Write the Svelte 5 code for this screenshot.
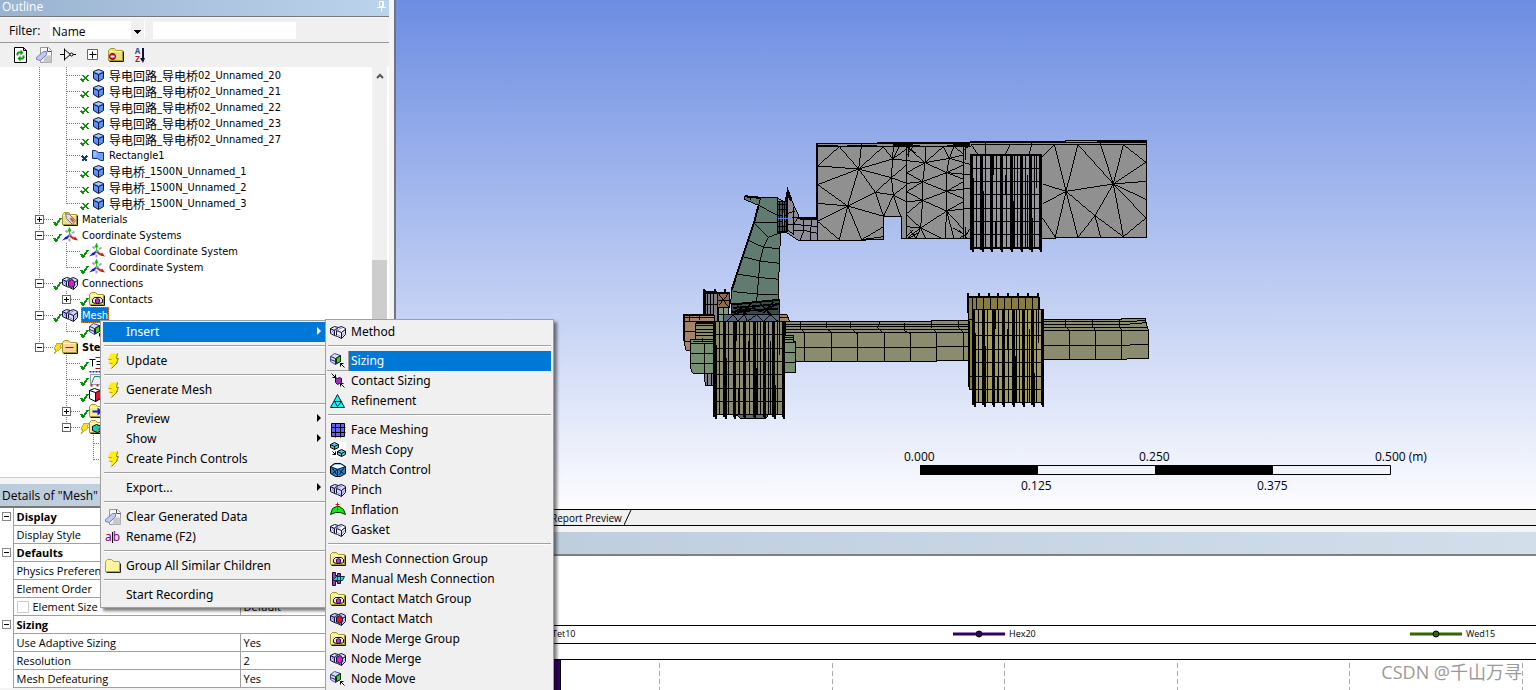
<script lang="ts">
    const bodies = ["20", "21", "22", "23", "27"].map((n) => ({
        guides: "vt", state: "hidden", icon: "body", label: "导电回路_导电桥02_Unnamed_" + n
    }));

    // guides: v = line through, t = branch, e = last branch, . = empty
    const tree = [
        ...bodies,
        { guides: "vt", state: "cross", icon: "surface", label: "Rectangle1" },
        { guides: "vt", state: "hidden", icon: "body", label: "导电桥_1500N_Unnamed_1" },
        { guides: "vt", state: "hidden", icon: "body", label: "导电桥_1500N_Unnamed_2" },
        { guides: "ve", state: "hidden", icon: "body", label: "导电桥_1500N_Unnamed_3" },
        { guides: "t", box: "+", state: "ok", icon: "materials", label: "Materials" },
        { guides: "t", box: "-", state: "ok", icon: "axes", label: "Coordinate Systems" },
        { guides: "vt", state: "ok", icon: "axes", label: "Global Coordinate System" },
        { guides: "ve", state: "ok", icon: "axes", label: "Coordinate System" },
        { guides: "t", box: "-", state: "ok", icon: "merge", label: "Connections" },
        { guides: "ve", box: "+", state: "ok", icon: "group", label: "Contacts" },
        { guides: "t", box: "-", state: "ok", icon: "mesh", label: "Mesh", selected: true },
        { guides: "ve", state: "ok", icon: "sizing", label: "" },
        { guides: "e", box: "-", state: "bolt", icon: "env", label: "Stea", bold: true },
        { guides: ".t", state: "ok", icon: "temp", label: "" },
        { guides: ".t", state: "ok", icon: "settings", label: "" },
        { guides: ".t", state: "ok", icon: "face", label: "" },
        { guides: ".t", box: "+", state: "ok", icon: "import", label: "" },
        { guides: ".e", box: "-", state: "bolt", icon: "solution", label: "" },
        { guides: "..t", state: "", icon: "", label: "" },
        { guides: "..e", state: "", icon: "", label: "" }
    ];

    const menu = [
        { label: "Insert", sub: true, active: true },
        null,
        { label: "Update", icon: "bolt" },
        null,
        { label: "Generate Mesh", icon: "bolt" },
        null,
        { label: "Preview", sub: true },
        { label: "Show", sub: true },
        { label: "Create Pinch Controls", icon: "bolt" },
        null,
        { label: "Export...", sub: true },
        null,
        { label: "Clear Generated Data", icon: "clear" },
        { label: "Rename (F2)", icon: "rename" },
        null,
        { label: "Group All Similar Children", icon: "folder" },
        null,
        { label: "Start Recording" }
    ];

    const insertMenu = [
        { label: "Method", icon: "method" },
        null,
        { label: "Sizing", icon: "sizing", active: true },
        { label: "Contact Sizing", icon: "contactsizing" },
        { label: "Refinement", icon: "refine" },
        null,
        { label: "Face Meshing", icon: "facemesh" },
        { label: "Mesh Copy", icon: "copy" },
        { label: "Match Control", icon: "match" },
        { label: "Pinch", icon: "mesh" },
        { label: "Inflation", icon: "inflation" },
        { label: "Gasket", icon: "method" },
        null,
        { label: "Mesh Connection Group", icon: "group" },
        { label: "Manual Mesh Connection", icon: "manual" },
        { label: "Contact Match Group", icon: "group" },
        { label: "Contact Match", icon: "contactmatch" },
        { label: "Node Merge Group", icon: "group" },
        { label: "Node Merge", icon: "merge" },
        { label: "Node Move", icon: "sizing" }
    ];

    const details = [
        { group: "Display" },
        { name: "Display Style", value: "" },
        { group: "Defaults" },
        { name: "Physics Preference", value: "" },
        { name: "Element Order", value: "" },
        { name: "Element Size", value: "Default", check: true },
        { group: "Sizing" },
        { name: "Use Adaptive Sizing", value: "Yes" },
        { name: "Resolution", value: "2" },
        { name: "Mesh Defeaturing", value: "Yes" }
    ];

    // fin packs of the heat sinks, in thirds of a pixel
    const fins = [
        { ox: 950, oy: 130, x: 62, y: 74, w: 214, h: 281, fill: "#96969f", rows: [76, 115, 154, 194, 235, 274, 313, 353] },
        { ox: 680, oy: 280, x: 101, y: 124, w: 212, h: 281, fill: "#8b8a6d", rows: [125, 163, 205, 244, 283, 325, 364, 404] },
        { ox: 860, oy: 280, x: 338, y: 88, w: 214, h: 281, fill: "#a39a62", rows: [89, 127, 168, 208, 247, 289, 328, 368] }
    ];
    const thick = [0, 30, 59, 89, 118, 148, 177, 205];
    const thin = [19, 45, 77, 107, 133, 165, 192];
    // short edges where a fin face shifts part way down
    const partial = [
        [10, 70, 211], [40, 110, 171], [70, 0, 60], [74, 200, 81], [97, 30, 70], [104, 60, 60],
        [128, 140, 141], [140, 0, 281], [155, 90, 191], [172, 60, 221], [187, 190, 91], [199, 0, 100]
    ];
    const spikes = [325, 358, 386, 415, 445, 474, 503, 533];

    let filter = $state("Name");
    let search = $state("");
    const split = (s: string) => s.split(/([\u4e00-\u9fff]+)/).filter(Boolean);
</script>

{#snippet cubes(fill, face)}
    <path d="M0 4l4-2 4 1 3-1 4 2v6l-4 4-4-2-3-1-4-2z" {fill} stroke="#111130" />
    <path d="M1 5l3 5M5 3l3 3M1 8l4-4M11 8l3-3M7 10l3 2M11 12l3-4M8 5l4-2" fill="none" stroke="#8583f0" />
    <path d="M0 4l4 2v5M4 6l4-3M6 6l5 2v6M11 8l4-3M6 6v5" fill="none" stroke="#111130" />
    {#if face}<path d="M6 6l3-2 3 2v4l-3 2-3-2z" fill={face} stroke="#111130" />{/if}
{/snippet}

{#snippet folder(fill)}
    <path d="M0 13V3l2-2h4l2 2h6v10z" {fill} stroke="#a3962a" />
    <path d="M1 14h14V4" fill="none" stroke="#111" />
    <path d="M1 4h12" stroke="#fffde0" />
{/snippet}

{#snippet icon(name)}
    <svg class="icon" viewBox="-.5 -.5 16 16" width="16" height="16" aria-hidden="true">
        {#if name === "body"}
            <path d="M4 4l5-2 5 2v7l-5 3-5-3z" fill="#5b93f5" stroke="#101840" />
            <path d="M5 4l4-1 4 1-4 2z" fill="#a9c8ff" />
            <path d="M4 5l5 2 5-2M9 7v7" fill="none" stroke="#101840" />
        {:else if name === "surface"}
            <path d="M3 3h3l3 2h5v8h-3l-3-2H3z" fill="#6f9ffb" stroke="#16316f" />
            <path d="M4 4h3v5H4z" fill="#9fc0ff" />
        {:else if name === "materials"}
            {@render folder("#e9dc98")}
            <path d="M3 2l4 1 6 6-3 4-6-6z" fill="#dcdcdc" stroke="#777" />
            <path d="M7 7l2-1 3 3-2 2z" fill="#e0533a" />
        {:else if name === "axes"}
            <path d="M3 3l9 8M12 4l-8 6M7 14V9" stroke="#aaa" stroke-width="2" stroke-dasharray="3 2" />
            <path d="M7 8V3" stroke="#1cd31c" /><path d="M5 4l2-5 2 5z" fill="#11b511" />
            <path d="M7 8l-4 3" stroke="#1b1be0" stroke-width="2" /><path d="M-.5 13l4-4 2 2z" fill="#1111c8" />
            <path d="M7 8l4 3" stroke="#e01b1b" stroke-width="2" /><path d="M15.500 13l-5-1 2-3z" fill="#d81010" />
            <path d="M6 7h2v2H6z" fill="#29c7e8" />
        {:else if name === "mesh"}
            {@render cubes("#d9d9fb", "")}
        {:else if name === "method"}
            {@render cubes("#f6f6ff", "")}
        {:else if name === "merge"}
            {@render cubes("#e4e0f4", "#e413e4")}
        {:else if name === "contactmatch"}
            {@render cubes("#cfcfee", "#e01030")}
        {:else if name === "group"}
            {@render folder("#f3eb9c")}
            <path d="M3 8l2-2h6l2 2v3l-3 1H6l-3-1z" fill="#e6dcea" stroke="#111" />
            <path d="M6 8l2-1 2 1v3l-2 1-2-1z" fill="#c22fc9" stroke="#301030" />
        {:else if name === "sizing"}
            <path d="M0 3l4-3 6 2v6l-5 3-5-3z" fill="#d7e0f4" stroke="#4a48b8" />
            <path d="M0 3l5 2v6M5 5l5-3M0 6l5 2" fill="none" stroke="#222250" />
            <path d="M6 5l4-3v6l-4 2z" fill="#3fd31f" stroke="#0a300a" />
            <path d="M10 10h3M10 10v3M10 10l4 4" stroke="#000" fill="none" />
        {:else if name === "contactsizing"}
            <path d="M5 4l2 1 2-1 2 1v6l-2-1-2 1-2-2z" fill="#9b30b8" stroke="#200828" />
            <path d="M1 0l4 4M5 1v3H2M10 10h3M10 10v3M10 10l4 4" stroke="#000" fill="none" />
        {:else if name === "refine"}
            <path d="M7 1l7 13H0z" fill="#1df1f1" stroke="#002a30" />
            <path d="M4 8h7l-4 5z" fill="none" stroke="#002a30" />
        {:else if name === "facemesh"}
            <path d="M1 1h13v13H1z" fill="#6464f4" stroke="#000" />
            <path d="M5 1v14M10 1v14M1 5h14M1 10h14" stroke="#000" />
        {:else if name === "copy"}
            <path d="M-.5-.5h16v16h-16z" fill="#fff" />
            <path d="M0 2l4-2 4 2v3L4 7 0 5z" fill="#58c7dc" stroke="#000" />
            <path d="M0 2l4 2 4-2M4 4v3" fill="none" stroke="#000" />
            <path d="M7 9l4-2 4 2v3l-4 2-4-2z" fill="#58c7dc" stroke="#000" />
            <path d="M7 9l4 2 4-2M11 11v3M2 9l3 3M5 9v3H2" fill="none" stroke="#000" />
        {:else if name === "match"}
            <path d="M0 4l4-3h6l5 3v7l-5 3H5l-5-3z" fill="#2d7ecb" stroke="#000" />
            <path d="M1 4l4-2h5l4 2-4 2H5z" fill="#fff" />
            <path d="M0 4l7 3 8-3M7 7v7M2 6l4 6M2 11l4-3M13 6l-4 6M13 11L9 8" fill="none" stroke="#03121f" />
        {:else if name === "inflation"}
            <path d="M0 12l2-6 4-2h3l4 3 2 5-5-2H5z" fill="#13e813" stroke="#063006" />
            <path d="M7 8V0M5 2h4" stroke="#e01010" />
        {:else if name === "manual"}
            <path d="M2 1h3v3h2V2h3v10H7v-2H5v4H2z" fill="#a034bd" stroke="#200828" />
            <path d="M3 8l3-3h8l-2 4H3z" fill="#2ed3df" stroke="#033" />
            <path d="M7 5v4M10 5v4" stroke="#033" />
        {:else if name === "env"}
            {@render folder("#fbd29a")}
            <path d="M3 8h8" stroke="#7a2b10" />
        {:else if name === "temp"}
            <path d="M0 4h6M3 4v7M7 6h5M7 9h5" stroke="#000" />
            <path d="M6 2h10M6 13h10" stroke="#a01010" />
        {:else if name === "settings"}
            <path d="M1 3h14v10H1z" fill="#eef" stroke="#99a" />
            <path d="M0 0h15" stroke="#1b1be0" stroke-width="2" stroke-dasharray="2 1" />
            <path d="M2 12l3-7h5l3 7" fill="none" stroke="#158a58" />
            <path d="M1 14h14" stroke="#c01010" stroke-width="2" stroke-dasharray="2 4" />
        {:else if name === "face"}
            <path d="M0 3l5-2 6 2v8l-5 3-6-3z" fill="#fff" stroke="#000" />
            <path d="M6 5l5-2v8l-5 3z" fill="#e4103c" stroke="#000" /><path d="M0 3l6 2" stroke="#000" />
        {:else if name === "import"}
            {@render folder("#f7ee8c")}
            <path d="M3 8h6" stroke="#1b1be0" stroke-width="2" /><path d="M8 4l5 4-5 4z" fill="#1b1be0" />
        {:else if name === "solution"}
            {@render folder("#f3eb9c")}
            <path d="M3 7l4-2 5 2v4l-4 2-5-2z" fill="#22c8d8" stroke="#000" />
            <path d="M6 7h2v4H6z" fill="#28d028" /><path d="M9 8h2v3H9z" fill="#e42020" />
        {:else if name === "bolt"}
            <path d="M5 0h7l-1 5h2l-2 4h1l-6 6H5l1-5H3l1-4H2z" fill="#ffee10" />
            <path d="M12 0l-1 5h2l-2 4h1l-6 6" fill="none" stroke="#8a7a10" />
            <path d="M3 6h3M4 10h3" stroke="#c79a10" />
        {:else if name === "clear"}
            <path d="M4 0h8l3 3v12H4z" fill="#f6f6f6" stroke="#999" />
            <path d="M8 8h7v7H7z" fill="#c9c9c9" /><path d="M11 0v4h4" fill="none" stroke="#555" />
            <path d="M0 10l7-6h3v3l-6 6-4-1z" fill="#c3c8f0" stroke="#7a80b8" />
        {:else if name === "folder"}
            <path d="M0 13V3l2-2h4l2 2h6v10z" fill="#fdf49b" stroke="#b5a52f" />
            <path d="M1 14h14V5" fill="none" stroke="#222" />
        {:else if name === "refresh"}
            <path d="M2 0h9l3 3v12H2z" fill="#fff" stroke="#000" /><path d="M11 0v3h3" fill="none" stroke="#000" />
            <path d="M5 8V6l1-1h3M11 8v2l-1 1H7" fill="none" stroke="#0d9a0d" stroke-width="2" />
            <path d="M8 2l3 3-3 3zM8 8l-3 3 3 3z" fill="#0d9a0d" />
        {:else if name === "diode"}
            <path d="M-.5 7h4M4 1v12M4 2l6 5-6 5M12 7h4" fill="none" stroke="#000" />
            <circle cx="11" cy="7" r="1.500" fill="#fff" stroke="#000" />
        {:else if name === "expand"}
            <path d="M3 2h10v10H3z" fill="#fff" stroke="#666" /><path d="M5 7h7M8 4v7" stroke="#000" />
        {:else if name === "hide"}
            {@render folder("#e9dc85")}
            <circle cx="4" cy="9" r="3" fill="#d01030" stroke="#600" /><path d="M2 9h4" stroke="#fff" stroke-width="2" />
        {:else if name === "rename"}
            <path d="M6 2h2M9 2h2M8.500 3v10M6 14h2M9 14h2" stroke="#000" fill="none" />
        {/if}
    </svg>
{/snippet}

{#snippet status(name)}
    <svg class="state" viewBox="0 0 9 16" width="9" height="16" shape-rendering="crispEdges" aria-hidden="true">
        {#if name === "ok"}
            <path d="M1 11l2 3 5-7" fill="none" stroke="#0a930a" stroke-width="2" />
        {:else if name === "hidden"}
            <path d="M1 12l2 2 5-6M3 8l5 6" fill="none" stroke="#0a930a" stroke-width="1.500" />
        {:else if name === "cross"}
            <path d="M2 9l5 5M7 9l-5 5" stroke="#11308c" stroke-width="1.500" />
        {:else if name === "bolt"}
            <path d="M4 4h5L7 8h2l-8 7 2-5H1z" fill="#ffe01e" stroke="#b39412" stroke-width=".7" />
        {/if}
    </svg>
{/snippet}

{#snippet popup(items, cls, title)}
    <div class="menu {cls}" role="menu" aria-label={title}>
        {#each items as item}
            {#if item}
                <button class="item" class:active={item.active} role="menuitem">
                    <span class="slot">{#if item.icon === "rename"}<span class="rename">a<i></i>b</span>{:else if item.icon}{@render icon(item.icon)}{/if}</span>
                    <span class="text">{item.label}</span>
                    {#if item.sub}<span class="arrow"></span>{/if}
                </button>
            {:else}
                <hr>
            {/if}
        {/each}
    </div>
{/snippet}

<div class="app">
    <aside>
        <header class="title">
            <span>Outline</span>
            <button class="pin" aria-label="Pin">
                <svg viewBox="0 0 9 12" width="9" height="12" shape-rendering="crispEdges"><path d="M2.500 1.500h4v5h-4zM0 7.500h9M4.500 8v4M5.500 1v6" fill="none" stroke="#fff" /></svg>
            </button>
        </header>
        <div class="filter">
            <label for="filter">Filter:</label>
            <select id="filter" bind:value={filter}><option>Name</option><option>Tag</option><option>Type</option></select>
            <input type="text" aria-label="Filter text" bind:value={search}>
        </div>
        <div class="tools">
            <button aria-label="Refresh">{@render icon("refresh")}</button>
            <button aria-label="Clear">{@render icon("clear")}</button>
            <button aria-label="Diode">{@render icon("diode")}</button>
            <button aria-label="Expand all">{@render icon("expand")}</button>
            <button aria-label="Hide folders">{@render icon("hide")}</button>
            <button class="sort" aria-label="Sort">
                <span><b>A</b><b>Z</b></span>
                <svg viewBox="0 0 5 15" width="5" height="15"><path d="M2 0h2v10h1l-2 5-3-5h2z" fill="#111133" /></svg>
            </button>
        </div>

        <div class="outline">
            <ul>
                {#each tree as row}
                    <li>
                        {#each row.guides as g, i}
                            <span class="guide">
                                <svg viewBox="0 0 27 16" width="27" height="16" shape-rendering="crispEdges" aria-hidden="true">
                                    {#if g !== "."}<path d={g === "e" ? "M13.500 0v9" : "M13.500 0v16"} stroke="#777" stroke-dasharray="1 1" />{/if}
                                    {#if g === "t" || g === "e"}<path d="M14 8.500h13" stroke="#777" stroke-dasharray="1 1" />{/if}
                                </svg>
                                {#if row.box && i === row.guides.length - 1}
                                    <button class="box" aria-label="Toggle {row.label}">
                                        <svg viewBox="0 0 9 9" width="9" height="9" shape-rendering="crispEdges"><path d="M.5.500h8v8h-8z" fill="#fff" stroke="#666" /><path d={row.box === "+" ? "M2 4.500h5M4.500 2v5" : "M2 4.500h5"} stroke="#000" /></svg>
                                    </button>
                                {/if}
                            </span>
                        {/each}
                        {@render status(row.state)}
                        {@render icon(row.icon)}
                        {#if row.label}
                            <span class="label" class:selected={row.selected} class:bold={row.bold}>{#each split(row.label) as part}<span class:han={part > "\u4e00"}>{part}</span>{/each}</span>
                        {/if}
                    </li>
                {/each}
            </ul>
            <div class="scroll">
                <svg viewBox="0 0 8 6" width="8" height="6"><path d="M1 5l3-3 3 3" fill="none" stroke="#555" stroke-width="2" /></svg>
                <div class="thumb"></div>
            </div>
        </div>

        <h2>Details of "Mesh"</h2>
        <table>
            <colgroup><col class="c1"><col class="c2"><col></colgroup>
            <tbody>
                {#each details as d}
                    <tr>
                        <td class="gutter">
                            {#if d.group}
                                <button aria-label="Collapse {d.group}"><svg viewBox="0 0 9 9" width="9" height="9" shape-rendering="crispEdges"><path d="M.5.500h8v8h-8z" fill="#fff" stroke="#888" /><path d="M2 4.500h5" stroke="#000" /></svg></button>
                            {/if}
                        </td>
                        {#if d.group}
                            <th colspan="2">{d.group}</th>
                        {:else if d.check}
                            <td><label><input type="checkbox">{d.name}</label></td><td>{d.value}</td>
                        {:else}
                            <td>{d.name}</td><td>{d.value}</td>
                        {/if}
                    </tr>
                {/each}
            </tbody>
        </table>
    </aside>

    <main>
        <div class="view">
            <svg viewBox="396 0 1140 509" role="img" aria-label="Meshed model">
                <g shape-rendering="crispEdges" stroke="#000" stroke-width="3" fill="none">
                    <!-- top conductor -->
                    <g transform="translate(680 130) scale(.33333)">
                        <path d="M410 40h182v-3h280v-3h286v-3h241l1 291h-273v4H666l-2-67h-53v69h-53v3H412z" fill="#909090" />
                        <path d="M410 41h460M413 51h460M592 38h806M640 41l60 8M800 41h70" />
                        <path d="M413 46h60M500 46h90M640 46h80M800 46h70" />
                        <path d="M411 40v222" stroke-width="5" />
                        <path d="M413 108l123 9M536 117l-58-67-65 58M536 117l9-75M536 117l74-67 28 37-102 30 98 26M536 117l50 70M536 117L413 164l90 64 33-111M503 228l-90-8M503 228l-90 46 65 55zM503 228l42 101 66-39M503 228l108 31M503 228l83-41 48-44M586 187l25 72M586 187l54 8M545 329l66-9" />
                        <path d="M640 195l-6-52 4-56 2-40M640 195l-29 64M640 195l22 64M640 195l40-30M640 195l40 20 48-4M634 143l46-38M634 143l46 17 48-5M638 87l22-40M638 87l42-30M638 87l97 11M680 48v278M610 50h70" />
                        <path d="M735 98l-55-48M735 98l2-50M735 98l55-48M735 98l-55 30 48 27zM735 98l65 30 8-43zM728 155l-48 30 48 26zM728 155l72-27M728 155l72 29-72 27M728 211l-48 40M728 211l-6 83-42-40M728 211l72 32M722 294l-42-4M722 294l-42 32M722 294l-14 32M722 294l16 32M722 294l78-51M722 294l60 30" />
                        <path d="M800 243l-5 83M800 243l22 83M800 243l50 55M800 243l50-28M800 243l70-8M800 243v-59l50 22M800 184l50-29M800 184l70-10M800 184v-56l50-23M800 128l50 20M800 128l70 6M808 85l-18-36M808 85l14-36M808 85l42-10M808 85l62 18M850 48v278M680 50l28 20M850 60l20-14M850 72l-30-24M850 320l20-22M680 318l20-18M850 312l-30-18M688 50l-4 30M700 50l-18 24M685 326l30-18M690 300l20 26M835 326l30-16M838 300l26 26M858 290v36M858 50v40" />
                        <path d="M640 43h60M820 43h50" stroke-width="6" />
                        <!-- connector -->
                        <path d="M292 204l26 14 6-31 34 75 54 2v67h-57l-35-23-30-1z" fill="#8e8c98" />
                        <path d="M360 266h52M318 218l6-31 10 25" stroke-width="9" />
                        <path d="M322 210v95M340 230v85M335 262l60 6-5 62M372 270v32l-12 28M322 250l22-6M322 285h40l50 5M340 302l35 0 37 8M322 300l20 14M355 262l-15 22" />
                        <path d="M292 214h28v92h-30z" fill="#46535d" />
                        <path d="M299 214v92M308 214v92M315 214v92M291 225h30M291 240h30M291 256h30M291 276h30M291 290h30" />
                        <path d="M310 248v36M294 266h34" stroke="#5a86e8" />
                        <!-- arm -->
                        <path d="M195 197l47 5 52 2-2 103h10l-3 63-5 140-142 12 3-42 33-100 34-102 14-52-41-17z" fill="#607b70" />
                        <path d="M236 226l56 30M222 278h70M222 278l43 44 37-14M265 322l-15 30-46-22M250 352l50 4M250 352l-10 41-10 120M188 380l52 13 59 7M170 432l65 10 62 6M160 485l70 7 64 3M242 203l-6 23M213 200v10" />
                        <path d="M236 226l-14 52-34 102-33 100M195 199l47 5" stroke-width="6" />
                    </g>
                    <!-- right half of the top conductor -->
                    <g transform="translate(950 130) scale(.33333)">
                        <path d="M348 184l-35-140-35 36M348 184l36-140 106 118-142 22M348 184l-70-22M348 184l-70 38M348 184l-32 138-38-58M348 184l36 138 51-65zM490 162l-40-124M490 162l30-118 68 53-98 65 98-8M490 162l98 46M490 162l98 102-68 56zM490 162l-55 95 17 65M435 257l85 63M180 44l-15 30M64 44l20 30M245 40l-7 34M108 40v34M62 44h526" />
                        <path d="M440 36h148M62 76h214" stroke-width="5" />
                    </g>
                    <!-- bar between the heat sinks -->
                    <g transform="translate(860 280) scale(.33333)">
                        <path d="M-225 125h440v-4h337v-3h233v-3h70l10 36v85h-65v3H552v4H230v3h-455z" fill="#8b8b70" />
                        <path d="M-225 133h560M-225 141h560M-225 149h560M-225 157l380 2 180-3M-225 203h455v-3h320M73 160v84M151 160v84M230 157v86M310 157v86M-8 160v84M-86 160v84M-167 160v84M60 125l-8 16 16 18M134 128v24l15 8M215 121v24l15 12M295 123v20l15 14M-28 125v20l18 15M-100 125v20l16 15M-180 125v20l16 15" />
                        <path d="M552 125h233l72-3M552 134h233l75-6M552 143h310M552 152h313M552 196h233l80-3M628 152v86M706 152v86M785 150v88M616 118v20l12 14M697 118v20l10 14M778 118v20l8 12" />
                        <path d="M325 50h213v38H340v242h-12V160z" fill="#897c43" />
                        <path d="M325 50h213M325 40v60M538 50v38" stroke-width="6" />
                        <path d="M337 50v38M349 50v38M370 50v38M391 50v38M412 50v38M433 50v38M454 50v38M475 50v38M497 50v38M517 50v38M326 92v230M326 120h12M326 290h12" />
                        {#each spikes as s}<path d="M{s} 38v12h4" stroke-width="6" />{/each}
                    </g>
                    <!-- clamp parts -->
                    <g transform="translate(680 280) scale(.33333)">
                        <path d="M72 36h40v280H76l-4-38z" fill="#7f7f88" />
                        <path d="M82 36v70M92 36v70M102 36v70M84 280v36M94 280v36M72 74h40" />
                        <path d="M112 38h38v46h-38z" fill="#8f6a4c" /><path d="M112 62h38M115 40l30 40M146 40l-30 36" />
                        <path d="M115 84h32v40h-32z" fill="#7d9c7d" /><path d="M130 84v40M115 104h32" />
                        <path d="M10 106h93v22H48l-3 56-17 29-10-3-6-26z" fill="#a5836a" />
                        <path d="M12 112h90M14 124h88M12 154h34M12 184h34M28 106v16M60 104v16" />
                        <path d="M10 106h93M72 28v10h78M104 26v12M134 26v12M74 30v78M11 106v78" stroke-width="6" />
                        <path d="M48 130h54v50H48z" fill="#8b8a6d" /><path d="M48 138h54M48 148h54M48 158h54M48 168h54" />
                        <path d="M32 178h70v102H38l-6-14z" fill="#778f72" /><path d="M74 190v90M34 220h68M34 250h68M34 190h68M40 184h60M68 174v10" />
                        <path d="M315 166h27v20h6v91h-33z" fill="#778f72" /><path d="M315 174h27M315 180h27M315 188h30M315 218h32M315 247h32" />
                        <path d="M298 104h24l6 20h-30z" fill="#a5836a" /><path d="M300 112h25" />
                        <path d="M130 103h170v22H130z" fill="#52657a" />
                        <path d="M140 124l20-20 14 20 20-20 8 20 28-20 20 20 20-20 24 20" />
                        <path d="M155 72l143-14v45H155z" fill="#384b4a" />
                        <path d="M155 74l143-14M158 84l138-12M155 96l140-10M160 104l60-20 20 10 50-20M170 76l30 26M210 72l-20 30M240 70l30 32M280 66l-30 34M165 92l60-8" stroke-width="5" />
                        <path d="M168 404h97l-8 12h-75z" fill="#556f6a" />
                    </g>
                    {#each fins as f}
                        <g transform="translate({f.ox} {f.oy}) scale(.33333)">
                            <rect x={f.x} y={f.y} width={f.w} height={f.h} fill={f.fill} />
                            {#each f.rows as y}<path d="M{f.x} {y}h{f.w}" />{/each}
                            {#each thin as t}<path d="M{f.x + t} {f.y}v{f.h}" />{/each}
                            {#each partial as [x, y, h]}<path d="M{f.x + x} {f.y + y}v{h}" />{/each}
                            {#each thick as t}<path d="M{f.x + t + 4} {f.y}v{f.h + 6}" stroke-width="9" /><path d="M{f.x + t + 6} {f.y + f.h}v11" stroke-width="6" />{/each}
                        </g>
                    {/each}
                </g>
                <g class="ruler">
                    <path d="M920.500 465.500h470v9h-470z" fill="none" stroke="#000" />
                    <path d="M920 465h118v10H920zM1155 465h118v10h-118z" />
                    <text x="904" y="461">0.000</text>
                    <text x="1139" y="461">0.250</text>
                    <text x="1375" y="461">0.500 (m)</text>
                    <text x="1021" y="490">0.125</text>
                    <text x="1257" y="490">0.375</text>
                </g>
            </svg>
        </div>
        <nav class="tabs">
            <a href="#report">Report Preview</a>
            <svg viewBox="0 0 8 15" width="8" height="15"><path d="M0 15L7 0" stroke="#000" /></svg>
        </nav>
        <div class="metrics"></div>
        <div class="legend">
            <span>Tet10</span>
            <span><svg viewBox="0 0 52 8" width="52" height="8"><path d="M0 4h52" stroke="#330066" stroke-width="3" /><circle cx="26" cy="4" r="3" fill="#330066" stroke="#000" /></svg>Hex20</span>
            <span><svg viewBox="0 0 52 8" width="52" height="8"><path d="M0 4h52" stroke="#336600" stroke-width="3" /><circle cx="26" cy="4" r="3" fill="#336600" stroke="#000" /></svg>Wed15</span>
        </div>
        <div class="plot">
            <div class="bar"></div>
            {#each Array(6) as _}<div class="tick"></div>{/each}
        </div>
    </main>

    {@render popup(menu, "context", "Mesh")}
    {@render popup(insertMenu, "insert", "Insert")}
    <p class="mark">CSDN @千山万寻</p>
</div>

<style>
    :global(body){
        margin: 0;
    }

    .app{
        position: relative;
        display: grid;
        grid-template-columns: 396px 1fr;
        height: 100vh;
        overflow: hidden;
        background: #fff;
        font-family: "Open Sans", "Noto Sans", "Noto Sans CJK SC", sans-serif;
        font-size: 12px;
        color: #000;
    }

    button{
        display: flex;
        align-items: center;
        justify-content: center;
        padding: 0;
        border: 0;
        background: none;
        font: inherit;
        color: inherit;
    }

    svg{
        display: block;
        flex: none;
    }

    aside{
        box-sizing: border-box;
        min-width: 0;
        overflow: hidden;
        border-right: 2px solid #707480;
        padding-right: 5px;
        background: #f4f4f4;
    }

    .title{
        display: flex;
        justify-content: space-between;
        height: 16px;
        padding: 0 3px 0 2px;
        border-bottom: 1px solid #777;
        background: linear-gradient(90deg, #9ab3d0, #bcd3ec);
        color: #fff;
        line-height: 13px;
    }

    .pin{
        height: 12px;
    }

    .filter{
        display: flex;
        align-items: center;
        height: 24px;
        margin-top: 1px;
        padding-left: 9px;
        border-bottom: 1px solid #999;
        background: #f0f0f0;
    }

    .filter label{
        width: 41px;
    }

    .filter select{
        appearance: none;
        width: 95px;
        height: 18px;
        padding: 2px 2px 0;
        border: 0;
        border-radius: 0;
        background: #fff;
        background-image: linear-gradient(#000, #000), linear-gradient(#000, #000), linear-gradient(#000, #000), linear-gradient(#000, #000), linear-gradient(#f0f0f0, #f0f0f0);
        background-size: 7px 1px, 5px 1px, 3px 1px, 1px 1px, 13px 18px;
        background-position: 84px 9px, 85px 10px, 86px 11px, 87px 12px, 81px 0;
        background-repeat: no-repeat;
        font: inherit;
        color: #000;
    }

    .filter input{
        box-sizing: border-box;
        width: 143px;
        height: 17px;
        margin-left: 8px;
        border: 0;
        background: #fff;
        font: inherit;
    }

    .tools{
        display: flex;
        height: 24px;
        padding-left: 8px;
        background: #f0f0f0;
    }

    .tools button{
        width: 24px;
    }

    .sort span{
        display: flex;
        flex-direction: column;
        font-size: 8px;
        line-height: 8px;
        color: #2a4a9c;
    }

    .sort b + b{
        color: #c01818;
    }

    .outline{
        display: flex;
        background: #fff;
        border-bottom: 1px solid #ccc;
    }

    ul{
        flex: 1;
        min-width: 0;
        margin: 0;
        padding: 0 0 10px 26px;
        list-style: none;
        font-family: "DejaVu Sans Condensed", "DejaVu Sans", "Noto Sans CJK SC", sans-serif;
        font-size: 11px;
    }

    li{
        display: flex;
        height: 16px;
        line-height: 18px;
        white-space: nowrap;
    }

    .guide{
        position: relative;
        flex: none;
    }

    .box{
        position: absolute;
        left: 9px;
        top: 4px;
    }

    .label{
        display: flex;
        margin-left: 3px;
        padding: 0 1px;
    }

    .han{
        font-family: "Noto Sans CJK SC", sans-serif;
        font-size: 12px;
    }

    .selected{
        height: 16px;
        background: #0078d7;
        color: #fff;
        outline: 1px dotted #e08020;
        outline-offset: -1px;
    }

    .bold{
        font-weight: bold;
    }

    .scroll{
        display: flex;
        flex-direction: column;
        align-items: center;
        width: 15px;
        margin-right: 2px;
        padding-top: 6px;
        background: #f0f0f0;
    }

    .thumb{
        width: 15px;
        height: 80px;
        margin-top: 181px;
        background: #cdcdcd;
    }

    h2{
        margin: 6px 0 0;
        padding-left: 2px;
        height: 22px;
        border-bottom: 2px solid #777;
        background: linear-gradient(90deg, #bccbdb, #cfdeea);
        font-size: 12px;
        font-weight: normal;
        line-height: 23px;
    }

    table{
        width: 100%;
        border-collapse: collapse;
        table-layout: fixed;
        background: #fff;
        font-size: 11px;
        line-height: 17px;
    }

    .c1{
        width: 13px;
    }

    .c2{
        width: 227px;
    }

    td, th{
        height: 17px;
        padding: 0 0 0 3px;
        border: 1px solid #a0a0a0;
        border-top: 0;
        text-align: left;
        white-space: nowrap;
        overflow: hidden;
    }

    .gutter{
        padding: 0 0 0 2px;
        border-bottom: 0;
        border-left: 0;
    }

    td label{
        display: flex;
        align-items: center;
    }

    td input{
        appearance: none;
        width: 12px;
        height: 12px;
        margin: 0 4px 0 0;
        border: 1px solid #ccc;
    }

    main{
        display: flex;
        flex-direction: column;
        min-width: 0;
        min-height: 0;
    }

    .view{
        flex: 1;
        min-height: 0;
        background: linear-gradient(#6c8de2, #fdfdff);
    }

    .view svg{
        width: 100%;
        height: 100%;
    }

    .ruler{
        font-size: 12px;
    }

    .tabs{
        display: flex;
        gap: 2px;
        height: 15px;
        padding-left: 155px;
        border: solid #000;
        border-width: 1px 0;
        background: #f0f0f0;
        font-size: 10px;
        line-height: 16px;
    }

    .tabs a{
        color: #000;
        text-decoration: none;
    }

    .metrics{
        height: 22px;
        border-top: 6px solid #f4f4f4;
        border-bottom: 2px solid #808080;
        background: linear-gradient(90deg, #bccbdb, #d1dfeb);
        margin-bottom: 69px;
    }

    .legend{
        display: grid;
        grid-template-columns: 401px 457px auto;
        align-items: center;
        justify-content: start;
        height: 15px;
        padding: 0 0 2px 156px;
        border: solid #000;
        border-width: 1px 0;
        font-size: 9px;
    }

    .legend span{
        display: flex;
        align-items: center;
        gap: 4px;
    }

    .plot{
        display: flex;
        height: 30px;
        margin: 15px 0 0 91px;
        padding-right: 13px;
        border-top: 1px solid #000;
    }

    .bar{
        width: 73px;
        border-right: 1px solid #000;
        background: #330066;
    }

    .tick{
        flex: 1;
        margin-top: 3px;
        background: repeating-linear-gradient(#aaa 0 5px, transparent 5px 8px) right / 1px 100% no-repeat;
    }

    .tick:nth-child(2){
        flex: none;
        width: 99px;
    }

    .menu{
        position: absolute;
        box-sizing: border-box;
        padding: 1px 1px 2px 2px;
        border: 1px solid #a0a0a0;
        background: #f0f0f0;
        box-shadow: 3px 3px 3px rgba(0,0,0,.5);
        font-family: "Noto Sans", "Open Sans", sans-serif;
    }

    .context{
        left: 100px;
        top: 320px;
        width: 227px;
    }

    .insert{
        left: 325px;
        top: 319px;
        width: 229px;
        padding: 2px 2px 2px 1px;
    }

    .item{
        justify-content: flex-start;
        width: 100%;
        height: 20px;
        text-align: left;
    }

    .slot{
        display: flex;
        flex: none;
        width: 22px;
        padding-left: 2px;
        box-sizing: border-box;
    }

    .insert .slot{
        padding-left: 3px;
    }

    .text{
        flex: 1;
        padding-left: 1px;
        line-height: 20px;
    }

    .insert .text{
        padding-left: 2px;
    }

    .active{
        background: #0078d7;
        color: #fff;
    }

    .insert .active .slot{
        height: 20px;
        align-items: center;
        background: #f0f0f0;
        box-shadow: inset -1px -1px #a0a0a0;
    }

    .arrow{
        margin: 0 4px 3px 0;
        border: solid transparent;
        border-width: 4px 0 4px 4px;
        border-left-color: currentColor;
    }

    hr{
        height: 1px;
        margin: 3px 0 4px 1px;
        border: 0;
        border-top: 1px solid #a0a0a0;
        background: #fff;
    }

    .rename{
        display: flex;
        align-items: center;
        color: #800080;
        font-size: 12px;
        line-height: 14px;
    }

    .rename i{
        width: 1px;
        height: 11px;
        background: #000;
    }

    .mark{
        position: absolute;
        right: 14px;
        bottom: 4px;
        margin: 0;
        font-size: 18px;
        line-height: 28px;
        color: #999;
    }
</style>
